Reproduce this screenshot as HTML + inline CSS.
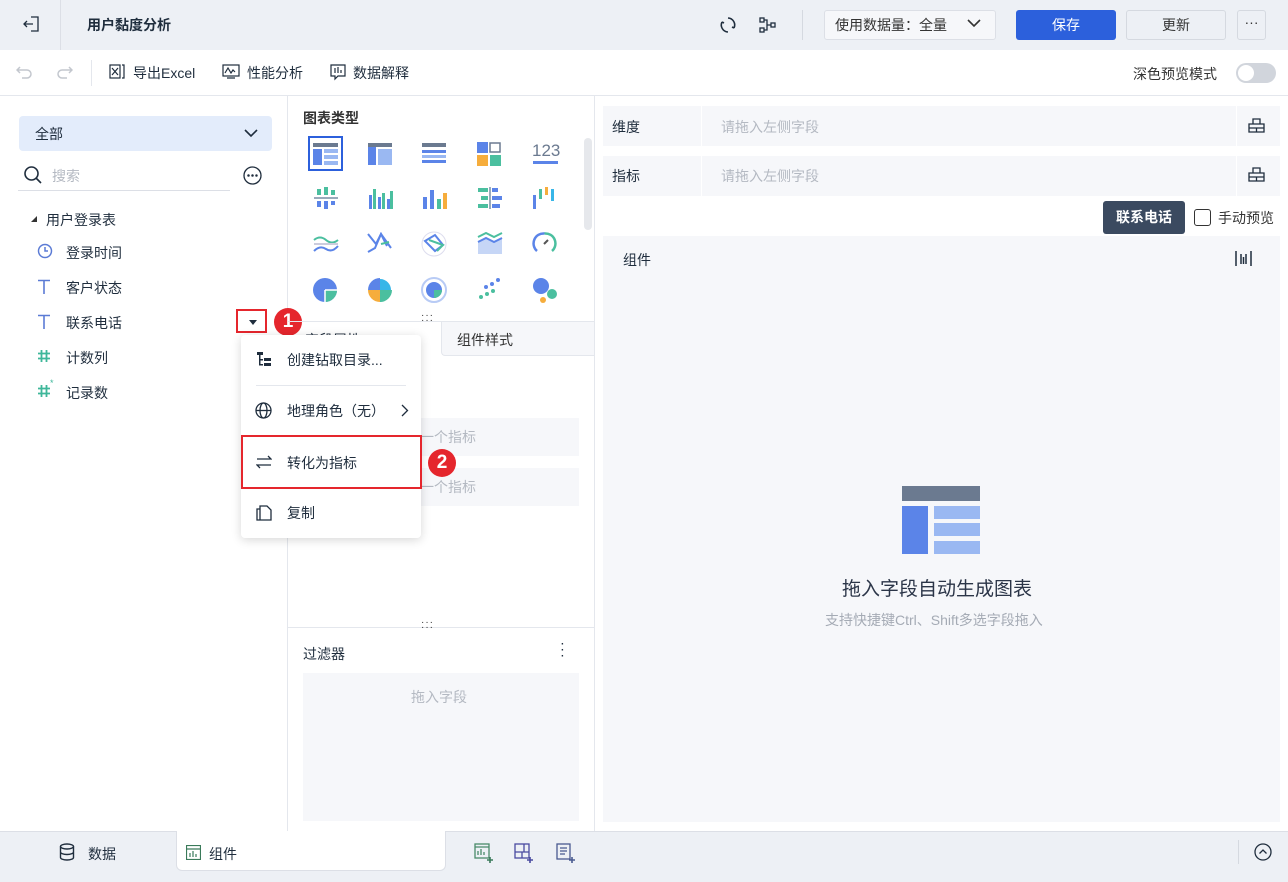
<!DOCTYPE html>
<html><head><meta charset="utf-8"><style>
*{box-sizing:border-box;margin:0;padding:0}
body{width:1288px;height:882px;position:relative;overflow:hidden;background:#fff;font-family:"Liberation Sans","Noto Sans CJK SC",sans-serif;color:#1f2d3d;font-size:14px}
.a{position:absolute}
.t{white-space:nowrap}
.gray{color:#b4b9c2}
svg{display:block}
</style></head><body>
<!-- top bar -->
<div class="a" style="left:0;top:0;width:1288px;height:50px;background:#edf0f5"></div>
<div class="a" style="left:60px;top:0;width:1px;height:50px;background:#dcdfe6"></div>
<svg class="a" style="left:23px;top:15px" width="18" height="18" viewBox="0 0 18 18" fill="none" stroke="#1f2d3d" stroke-width="1.3"><path d="M8 2h7v14H8M1 9h9M4 6l-3 3 3 3"/></svg>
<div class="a t" style="left:87px;top:15px;font-size:14px;font-weight:bold">用户黏度分析</div>
<svg class="a" style="left:718px;top:15px" width="20" height="20" viewBox="0 0 20 20" fill="none" stroke="#1f2d3d" stroke-width="1.6"><path d="M10 3a7 7 0 0 1 6 10M10 17a7 7 0 0 1-6-10"/><path d="M16 13l-2-1M4 7l2 1"/></svg>
<svg class="a" style="left:758px;top:15px" width="20" height="20" viewBox="0 0 20 20" fill="none" stroke="#1f2d3d" stroke-width="1.3"><rect x="2" y="3" width="4" height="4"/><rect x="2" y="13" width="4" height="4"/><rect x="13" y="8" width="4" height="4"/><path d="M6 5h3v10H6M9 10h4"/></svg>
<div class="a" style="left:802px;top:10px;width:1px;height:30px;background:#d5d9e0"></div>
<div class="a" style="left:824px;top:10px;width:172px;height:30px;background:#f6f7fa;border:1px solid #dcdfe6;border-radius:3px"></div>
<div class="a t" style="left:835px;top:15px;color:#333">使用数据量：全量</div>
<svg class="a" style="left:967px;top:18px" width="14" height="10" viewBox="0 0 14 10" fill="none" stroke="#333" stroke-width="1.6"><path d="M1 2l6 6 6-6"/></svg>
<div class="a" style="left:1016px;top:10px;width:100px;height:30px;background:#2c60dc;border-radius:3px;color:#fff;text-align:center;line-height:30px">保存</div>
<div class="a" style="left:1126px;top:10px;width:100px;height:30px;background:#edf0f5;border:1px solid #d5d9e0;border-radius:3px;text-align:center;line-height:28px;color:#333">更新</div>
<div class="a" style="left:1237px;top:10px;width:29px;height:30px;border:1px solid #d5d9e0;border-radius:3px;text-align:center;line-height:22px;color:#333">···</div>
<!-- toolbar -->
<div class="a" style="left:0;top:95px;width:1288px;height:1px;background:#e4e7ed"></div>
<svg class="a" style="left:16px;top:64px" width="18" height="16" viewBox="0 0 18 16" fill="none" stroke="#c3c7ce" stroke-width="1.5"><path d="M4 3L1 6l3 3M1 6h10a4 4 0 0 1 0 8H6"/></svg>
<svg class="a" style="left:55px;top:64px" width="18" height="16" viewBox="0 0 18 16" fill="none" stroke="#c3c7ce" stroke-width="1.5"><path d="M14 3l3 3-3 3M17 6H7a4 4 0 0 0 0 8h5"/></svg>
<div class="a" style="left:91px;top:60px;width:1px;height:26px;background:#e4e7ed"></div>
<svg class="a" style="left:109px;top:64px" width="16" height="16" viewBox="0 0 16 16" fill="none" stroke="#1f2d3d" stroke-width="1.2"><rect x="1" y="1" width="10" height="13"/><path d="M3 4l6 7M9 4l-6 7M13 1h2v13h-2"/></svg>
<div class="a t" style="left:133px;top:63px">导出Excel</div>
<svg class="a" style="left:222px;top:64px" width="18" height="16" viewBox="0 0 18 16" fill="none" stroke="#1f2d3d" stroke-width="1.2"><rect x="1" y="1" width="16" height="11"/><path d="M3 9l3-5 3 5 2-3 2 2M5 14h8"/></svg>
<div class="a t" style="left:247px;top:63px">性能分析</div>
<svg class="a" style="left:330px;top:64px" width="16" height="17" viewBox="0 0 16 17" fill="none" stroke="#1f2d3d" stroke-width="1.2"><path d="M1 1h14v11H8l-3 3v-3H1z"/><path d="M5 4v5M8 3v6M11 6v3"/></svg>
<div class="a t" style="left:353px;top:63px">数据解释</div>
<div class="a t" style="left:1133px;top:64px;font-size:14px;color:#333">深色预览模式</div>
<div class="a" style="left:1236px;top:63px;width:40px;height:20px;background:#d1d5dc;border-radius:10px"></div>
<div class="a" style="left:1238px;top:65px;width:16px;height:16px;background:#fff;border-radius:8px"></div>
<!-- left panel -->
<div class="a" style="left:287px;top:96px;width:1px;height:735px;background:#e4e7ed"></div>
<div class="a" style="left:19px;top:116px;width:253px;height:35px;background:#e3ecfb;border-radius:4px"></div>
<div class="a t" style="left:35px;top:124px">全部</div>
<svg class="a" style="left:244px;top:128px" width="14" height="10" viewBox="0 0 14 10" fill="none" stroke="#1f2d3d" stroke-width="1.6"><path d="M1 2l6 6 6-6"/></svg>
<svg class="a" style="left:23px;top:165px" width="20" height="20" viewBox="0 0 20 20" fill="none" stroke="#1f2d3d" stroke-width="1.6"><circle cx="8.5" cy="8.5" r="6.5"/><path d="M13 13l5 5"/></svg>
<div class="a t gray" style="left:52px;top:166px">搜索</div>
<div class="a" style="left:18px;top:190px;width:212px;height:1px;background:#dcdfe6"></div>
<svg class="a" style="left:243px;top:166px" width="19" height="19" viewBox="0 0 19 19" fill="none" stroke="#1f2d3d" stroke-width="1.3"><circle cx="9.5" cy="9.5" r="8.5"/><circle cx="5.5" cy="9.5" r=".6" fill="#1f2d3d"/><circle cx="9.5" cy="9.5" r=".6" fill="#1f2d3d"/><circle cx="13.5" cy="9.5" r=".6" fill="#1f2d3d"/></svg>
<div class="a" style="left:31px;top:216px;width:0;height:0;border-left:6px solid transparent;border-bottom:6px solid #333"></div>
<div class="a t" style="left:46px;top:210px">用户登录表</div>
<svg class="a" style="left:37px;top:243px" width="16" height="16" viewBox="0 0 16 16" fill="none" stroke="#5b7bd5" stroke-width="1.5"><circle cx="8" cy="8" r="6.5"/><path d="M8 4v4h3"/></svg>
<div class="a t" style="left:66px;top:243px">登录时间</div>
<svg class="a" style="left:37px;top:279px" width="14" height="15" viewBox="0 0 14 15" fill="none" stroke="#5b7bd5" stroke-width="1.6"><path d="M1 1.5h12M7 1.5V15"/></svg>
<div class="a t" style="left:66px;top:278px">客户状态</div>
<svg class="a" style="left:37px;top:314px" width="14" height="15" viewBox="0 0 14 15" fill="none" stroke="#5b7bd5" stroke-width="1.6"><path d="M1 1.5h12M7 1.5V15"/></svg>
<div class="a t" style="left:66px;top:313px">联系电话</div>
<svg class="a" style="left:37px;top:349px" width="14" height="14" viewBox="0 0 14 14" fill="none" stroke="#3fb79a" stroke-width="1.8"><path d="M4.5 1v12M9.5 1v12M1 4.5h12M1 9.5h12"/></svg>
<div class="a t" style="left:66px;top:348px">计数列</div>
<svg class="a" style="left:37px;top:384px" width="14" height="14" viewBox="0 0 14 14" fill="none" stroke="#3fb79a" stroke-width="1.8"><path d="M4.5 1v12M9.5 1v12M1 4.5h12M1 9.5h12"/></svg>
<div class="a t" style="left:50px;top:378px;color:#3fb79a;font-size:9px">*</div>
<div class="a t" style="left:66px;top:383px">记录数</div>
<div class="a" style="left:236px;top:309px;width:31px;height:24px;border:2px solid #e5262d"></div>
<div class="a" style="left:249px;top:320px;border-left:4px solid transparent;border-right:4px solid transparent;border-top:5px solid #1f2d3d"></div>
<div class="a" style="left:274px;top:308px;width:28px;height:28px;border-radius:14px;background:#e5262d;color:#fff;font-weight:bold;font-size:19px;text-align:center;line-height:28px">1</div>
<!-- middle panel -->
<div class="a" style="left:594px;top:96px;width:1px;height:735px;background:#e4e7ed"></div>
<div class="a t" style="left:303px;top:108px;font-weight:bold;font-size:14px;color:#333">图表类型</div>
<div class="a" style="left:584px;top:138px;width:8px;height:92px;background:#e6e8ec;border-radius:4px"></div>
<div class="a" style="left:308px;top:136px;width:35px;height:35px;border:2px solid #2c60dc"></div>
<svg class="a" style="left:313px;top:143px" width="25" height="22" viewBox="0 0 25 22"><rect width="25" height="4" fill="#6b7a90"/><rect y="6" width="9" height="16" fill="#5b84e8"/><rect x="11" y="6" width="14" height="4" fill="#9ab8f2"/><rect x="11" y="12" width="14" height="4" fill="#9ab8f2"/><rect x="11" y="18" width="14" height="4" fill="#9ab8f2"/></svg>
<svg class="a" style="left:368px;top:143px" width="24" height="22" viewBox="0 0 24 22"><rect width="8" height="22" fill="#5b84e8"/><rect width="24" height="4" fill="#6b7a90"/><rect x="10" y="6" width="14" height="16" fill="#9ab8f2"/></svg>
<svg class="a" style="left:422px;top:143px" width="24" height="22" viewBox="0 0 24 22"><rect width="24" height="4" fill="#6b7a90"/><rect y="7" width="24" height="3" fill="#5b84e8"/><rect y="12" width="24" height="3" fill="#9ab8f2"/><rect y="17" width="24" height="3" fill="#5b84e8"/></svg>
<svg class="a" style="left:477px;top:142px" width="24" height="24" viewBox="0 0 24 24"><rect width="11" height="11" fill="#5b84e8"/><rect x="13" y="1" width="10" height="9" fill="none" stroke="#6b7a90" stroke-width="1.5"/><rect y="13" width="11" height="11" fill="#f6ad3c"/><rect x="13" y="13" width="11" height="11" fill="#4bbf9f"/></svg>
<div class="a t" style="left:532px;top:141px;font-size:17px;color:#6b7a90">123</div>
<div class="a" style="left:533px;top:161px;width:25px;height:3px;background:#5b84e8"></div>
<svg class="a" style="left:314px;top:187px" width="24" height="22" viewBox="0 0 24 22"><rect x="3" y="2" width="4" height="6" fill="#4bbf9f"/><rect x="10" y="0" width="4" height="8" fill="#4bbf9f"/><rect x="17" y="3" width="4" height="5" fill="#4bbf9f"/><rect y="10" width="24" height="2" fill="#9ab"/><rect x="3" y="14" width="4" height="6" fill="#5b84e8"/><rect x="10" y="14" width="4" height="8" fill="#5b84e8"/><rect x="17" y="14" width="4" height="4" fill="#5b84e8"/></svg>
<svg class="a" style="left:369px;top:187px" width="24" height="22" viewBox="0 0 24 22"><rect x="0" y="8" width="3" height="14" fill="#5b84e8"/><rect x="4" y="2" width="3" height="20" fill="#4bbf9f"/><rect x="9" y="10" width="3" height="12" fill="#5b84e8"/><rect x="13" y="6" width="3" height="16" fill="#4bbf9f"/><rect x="18" y="12" width="3" height="10" fill="#5b84e8"/><rect x="21" y="4" width="3" height="18" fill="#4bbf9f"/></svg>
<svg class="a" style="left:423px;top:187px" width="24" height="22" viewBox="0 0 24 22"><rect x="0" y="10" width="4" height="12" fill="#5b84e8"/><rect x="7" y="3" width="4" height="19" fill="#5b84e8"/><rect x="14" y="12" width="4" height="10" fill="#4bbf9f"/><rect x="20" y="6" width="4" height="16" fill="#f6ad3c"/></svg>
<svg class="a" style="left:478px;top:187px" width="24" height="22" viewBox="0 0 24 22"><rect x="0" y="1" width="10" height="4" fill="#4bbf9f"/><rect x="14" y="1" width="6" height="4" fill="#5b84e8"/><rect x="3" y="9" width="7" height="4" fill="#4bbf9f"/><rect x="14" y="9" width="10" height="4" fill="#5b84e8"/><rect x="0" y="17" width="10" height="4" fill="#4bbf9f"/><rect x="14" y="17" width="8" height="4" fill="#5b84e8"/><rect x="11" y="0" width="2" height="22" fill="#9ab"/></svg>
<svg class="a" style="left:533px;top:187px" width="24" height="22" viewBox="0 0 24 22"><rect x="0" y="8" width="3" height="14" fill="#5b84e8"/><rect x="6" y="2" width="3" height="10" fill="#4bbf9f"/><rect x="12" y="0" width="3" height="8" fill="#f6ad3c"/><rect x="18" y="2" width="3" height="12" fill="#38b6e8"/></svg>
<svg class="a" style="left:313px;top:232px" width="26" height="22" viewBox="0 0 26 22" fill="none" stroke-width="2"><path d="M1 8q6-5 12 0t12 0" stroke="#4bbf9f"/><path d="M1 12h24" stroke="#ccd"/><path d="M1 19q6-6 12-2t12-3" stroke="#5b84e8"/></svg>
<svg class="a" style="left:367px;top:232px" width="26" height="22" viewBox="0 0 26 22" fill="none" stroke-width="2"><path d="M1 2l8 10 5-10 6 12" stroke="#5b84e8"/><path d="M1 20l7-4 6-14 10 14" stroke="#5b84e8"/><path d="M14 12l8-2" stroke="#4bbf9f"/></svg>
<svg class="a" style="left:421px;top:231px" width="26" height="26" viewBox="0 0 26 26" fill="none" stroke-width="2"><circle cx="13" cy="13" r="12" stroke="#dde" stroke-width="1"/><path d="M4 10l10-6 8 10-8 6z" stroke="#5b84e8"/><path d="M8 9l14 5-6 6" stroke="#4bbf9f"/></svg>
<svg class="a" style="left:477px;top:232px" width="26" height="22" viewBox="0 0 26 22"><path d="M1 10l8-4 8 4 8-4v16H1z" fill="#c6d6f6"/><path d="M1 10l8-4 8 4 8-4" stroke="#5b84e8" stroke-width="2" fill="none"/><path d="M1 5l8-4 8 4 8-4" stroke="#4bbf9f" stroke-width="2" fill="none"/></svg>
<svg class="a" style="left:532px;top:231px" width="25" height="25" viewBox="0 0 25 25" fill="none" stroke-width="2.5"><path d="M5 20A10 10 0 0 1 12.5 2.5" stroke="#5b84e8"/><path d="M12.5 2.5A10 10 0 0 1 20 20" stroke="#4bbf9f"/><path d="M12 13l4-4" stroke="#555" stroke-width="2"/></svg>
<svg class="a" style="left:313px;top:278px" width="24" height="24" viewBox="0 0 24 24"><circle cx="12" cy="12" r="12" fill="#5b84e8"/><path d="M12 12h12a12 12 0 0 1-12 12z" fill="#4bbf9f"/><path d="M12 12h12M12 12v12" stroke="#fff" stroke-width="1.5"/></svg>
<svg class="a" style="left:368px;top:278px" width="24" height="24" viewBox="0 0 24 24"><path d="M12 12V0A12 12 0 0 0 0 12z" fill="#5b84e8"/><path d="M12 12V1a11 11 0 0 1 11 11z" fill="#38b6e8"/><path d="M12 12H0a12 12 0 0 0 12 12z" fill="#f6ad3c"/><path d="M12 12h12a12 12 0 0 1-12 12z" fill="#4bbf9f"/></svg>
<svg class="a" style="left:421px;top:277px" width="26" height="26" viewBox="0 0 26 26"><circle cx="13" cy="13" r="12" fill="none" stroke="#b8cbf5" stroke-width="2"/><circle cx="13" cy="13" r="8" fill="#5b84e8"/><path d="M13 13h8a8 8 0 0 1-8 8z" fill="#4bbf9f"/></svg>
<svg class="a" style="left:478px;top:278px" width="24" height="22" viewBox="0 0 24 22"><circle cx="20" cy="2" r="2" fill="#5b84e8"/><circle cx="14" cy="6" r="2" fill="#5b84e8"/><circle cx="8" cy="9" r="2" fill="#5b84e8"/><circle cx="15" cy="13" r="2" fill="#4bbf9f"/><circle cx="9" cy="16" r="2" fill="#4bbf9f"/><circle cx="3" cy="19" r="2" fill="#4bbf9f"/></svg>
<svg class="a" style="left:532px;top:277px" width="26" height="26" viewBox="0 0 26 26"><circle cx="9" cy="9" r="8" fill="#5b84e8"/><circle cx="20" cy="17" r="5" fill="#4bbf9f"/><circle cx="11" cy="23" r="3" fill="#f6ad3c"/></svg>
<div class="a" style="left:288px;top:321px;width:306px;height:1px;background:#e4e7ed"></div>
<div class="a t" style="left:421px;top:313px;font-size:10px;line-height:5px;letter-spacing:1px;color:#333">···<br>···</div>
<div class="a t" style="left:305px;top:330px;color:#1f2d3d">字段属性</div>
<div class="a" style="left:441px;top:322px;width:153px;height:34px;background:#f6f7fa;border-left:1px solid #e4e7ed;border-bottom:1px solid #e4e7ed;border-radius:0 0 0 4px"></div>
<div class="a t" style="left:457px;top:330px;color:#333">组件样式</div>
<div class="a" style="left:303px;top:418px;width:276px;height:38px;background:#f6f7fa"></div>
<div class="a t gray" style="left:420px;top:427px">一个指标</div>
<div class="a" style="left:303px;top:468px;width:276px;height:38px;background:#f6f7fa"></div>
<div class="a t gray" style="left:420px;top:477px">一个指标</div>
<div class="a" style="left:288px;top:627px;width:306px;height:1px;background:#e4e7ed"></div>
<div class="a t" style="left:421px;top:620px;font-size:10px;line-height:5px;letter-spacing:1px;color:#333">···<br>···</div>
<div class="a t" style="left:303px;top:644px;color:#1f2d3d">过滤器</div>
<div class="a t" style="left:561px;top:642px;font-weight:bold;line-height:6px;font-size:10px">·<br>·<br>·</div>
<div class="a" style="left:303px;top:673px;width:276px;height:148px;background:#f6f7fa"></div>
<div class="a t gray" style="left:411px;top:687px">拖入字段</div>
<!-- context menu -->
<div class="a" style="left:241px;top:335px;width:180px;height:203px;background:#fff;border-radius:4px;box-shadow:0 2px 10px rgba(0,0,0,.16)"></div>
<svg class="a" style="left:256px;top:351px" width="16" height="16" viewBox="0 0 16 16" fill="#1f2d3d"><rect x="1" y="1" width="6" height="3"/><rect x="3" y="4" width="1.5" height="10"/><rect x="3" y="8" width="4" height="1.5"/><rect x="3" y="13" width="4" height="1.5"/><rect x="8" y="7" width="7" height="3"/><rect x="8" y="12" width="7" height="3"/></svg>
<div class="a t" style="left:287px;top:350px">创建钻取目录...</div>
<div class="a" style="left:256px;top:385px;width:150px;height:1px;background:#e4e7ed"></div>
<svg class="a" style="left:255px;top:402px" width="17" height="17" viewBox="0 0 17 17" fill="none" stroke="#1f2d3d" stroke-width="1.3"><circle cx="8.5" cy="8.5" r="7.5"/><ellipse cx="8.5" cy="8.5" rx="3.5" ry="7.5"/><path d="M1 8.5h15"/></svg>
<div class="a t" style="left:287px;top:401px">地理角色（无）</div>
<svg class="a" style="left:401px;top:404px" width="8" height="13" viewBox="0 0 8 13" fill="none" stroke="#1f2d3d" stroke-width="1.3"><path d="M1 1l5.5 5.5L1 12"/></svg>
<div class="a" style="left:241px;top:435px;width:181px;height:54px;border:2px solid #e5262d"></div>
<svg class="a" style="left:256px;top:455px" width="16" height="14" viewBox="0 0 16 14" fill="none" stroke="#1f2d3d" stroke-width="1.3"><path d="M1 4h14l-3-3M15 10H1l3 3"/></svg>
<div class="a t" style="left:287px;top:453px">转化为指标</div>
<div class="a" style="left:428px;top:449px;width:28px;height:28px;border-radius:14px;background:#e5262d;color:#fff;font-weight:bold;font-size:19px;text-align:center;line-height:28px">2</div>
<svg class="a" style="left:256px;top:505px" width="16" height="16" viewBox="0 0 16 16" fill="none" stroke="#1f2d3d" stroke-width="1.3"><path d="M4 4V1h7l4 4v10H4V4zM4 4H1v11h3"/></svg>
<div class="a t" style="left:287px;top:503px">复制</div>
<!-- right panel -->
<div class="a" style="left:603px;top:106px;width:98px;height:40px;background:#f6f7fa"></div>
<div class="a" style="left:702px;top:106px;width:534px;height:40px;background:#f6f7fa"></div>
<div class="a" style="left:1237px;top:106px;width:43px;height:40px;background:#f6f7fa"></div>
<div class="a t" style="left:612px;top:117px">维度</div>
<div class="a t gray" style="left:721px;top:117px">请拖入左侧字段</div>
<div class="a" style="left:603px;top:156px;width:98px;height:40px;background:#f6f7fa"></div>
<div class="a" style="left:702px;top:156px;width:534px;height:40px;background:#f6f7fa"></div>
<div class="a" style="left:1237px;top:156px;width:43px;height:40px;background:#f6f7fa"></div>
<div class="a t" style="left:612px;top:166px">指标</div>
<div class="a t gray" style="left:721px;top:166px">请拖入左侧字段</div>
<svg class="a" style="left:1248px;top:117px" width="17" height="17" viewBox="0 0 17 17" fill="none" stroke="#1f2d3d" stroke-width="1.3"><path d="M5 7V2h7v5M1 7h15v8H1zM1 11h15M8.5 11v4"/></svg>
<svg class="a" style="left:1248px;top:166px" width="17" height="17" viewBox="0 0 17 17" fill="none" stroke="#1f2d3d" stroke-width="1.3"><path d="M5 7V2h7v5M1 7h15v8H1zM1 11h15M8.5 11v4"/></svg>
<div class="a" style="left:1103px;top:201px;width:82px;height:33px;background:#3b4a60;border-radius:3px;color:#fff;text-align:center;line-height:33px;font-weight:bold">联系电话</div>
<div class="a" style="left:1194px;top:209px;width:17px;height:17px;border:1.5px solid #333;border-radius:3px"></div>
<div class="a t" style="left:1218px;top:208px;color:#333">手动预览</div>
<div class="a" style="left:603px;top:236px;width:677px;height:586px;background:#f6f7fa"></div>
<div class="a t" style="left:623px;top:250px">组件</div>
<svg class="a" style="left:1235px;top:250px" width="17" height="17" viewBox="0 0 17 17" fill="none" stroke="#1f2d3d" stroke-width="1.5"><path d="M1 1v15M16 1v15M6 4v10M11 4v10M8.5 7v7"/></svg>
<svg class="a" style="left:902px;top:486px" width="78" height="68" viewBox="0 0 78 68"><rect width="78" height="15" fill="#6b7a90"/><rect y="20" width="26" height="48" fill="#5b84e8"/><rect x="32" y="20" width="46" height="13" fill="#9ab8f2"/><rect x="32" y="37" width="46" height="13" fill="#9ab8f2"/><rect x="32" y="55" width="46" height="13" fill="#9ab8f2"/></svg>
<div class="a t" style="left:842px;top:574px;font-size:19px;color:#2b3548">拖入字段自动生成图表</div>
<div class="a t" style="left:825px;top:610px;font-size:14px;color:#a5abb5">支持快捷键Ctrl、Shift多选字段拖入</div>
<!-- bottom bar -->
<div class="a" style="left:0;top:831px;width:1288px;height:51px;background:#edf0f5;border-top:1px solid #dcdfe6"></div>
<svg class="a" style="left:59px;top:843px" width="16" height="18" viewBox="0 0 16 18" fill="none" stroke="#1f2d3d" stroke-width="1.4"><ellipse cx="8" cy="3.5" rx="6.5" ry="2.5"/><path d="M1.5 3.5v11c0 1.4 2.9 2.5 6.5 2.5s6.5-1.1 6.5-2.5v-11M1.5 9c0 1.4 2.9 2.5 6.5 2.5S14.5 10.4 14.5 9"/></svg>
<div class="a t" style="left:88px;top:844px">数据</div>
<div class="a" style="left:176px;top:831px;width:270px;height:40px;background:#fff;border:1px solid #dcdfe6;border-top:none;border-radius:0 0 6px 6px"></div>
<svg class="a" style="left:186px;top:845px" width="15" height="15" viewBox="0 0 15 15" fill="none" stroke="#3a7a5a" stroke-width="1.2"><rect x=".5" y=".5" width="14" height="14"/><path d="M.5 4h14M4 12V8M7 12V6M10 12V9"/></svg>
<div class="a t" style="left:209px;top:844px">组件</div>
<svg class="a" style="left:474px;top:843px" width="20" height="20" viewBox="0 0 20 20" fill="none" stroke-width="1.3"><rect x="1" y="1" width="14" height="14" stroke="#4a8a6a"/><path d="M1 4h14M4 12V8M7 12V6M10 12V9" stroke="#4a8a6a"/><path d="M16 14v6M13 17h6" stroke="#3a7a5a" stroke-width="1.6"/></svg>
<svg class="a" style="left:514px;top:843px" width="20" height="20" viewBox="0 0 20 20" fill="none" stroke-width="1.3" stroke="#4a4aa0"><rect x="1" y="1" width="14" height="14"/><path d="M1 9h14M8 9v6M10 1v8"/><path d="M16 14v6M13 17h6" stroke-width="1.6"/></svg>
<svg class="a" style="left:556px;top:843px" width="20" height="20" viewBox="0 0 20 20" fill="none" stroke-width="1.3" stroke="#4a5a90"><rect x="1" y="1" width="13" height="15"/><path d="M4 5h7M4 8h7M4 11h5"/><path d="M16 14v6M13 17h6" stroke-width="1.6"/></svg>
<div class="a" style="left:1238px;top:840px;width:1px;height:24px;background:#d5d9e0"></div>
<svg class="a" style="left:1254px;top:843px" width="18" height="18" viewBox="0 0 18 18" fill="none" stroke="#1f2d3d" stroke-width="1.3"><circle cx="9" cy="9" r="8"/><path d="M5.5 10.5L9 7l3.5 3.5"/></svg>
</body></html>
